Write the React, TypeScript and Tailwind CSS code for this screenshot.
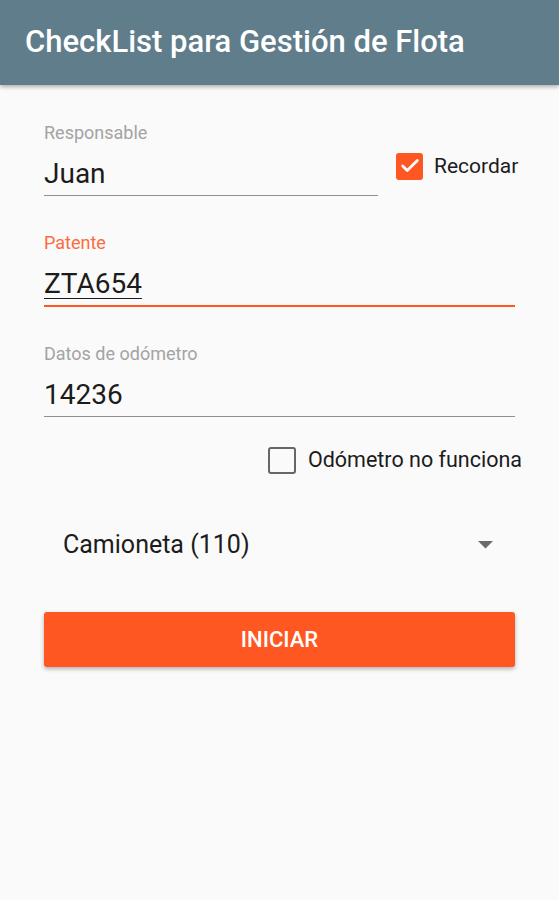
import { Check } from 'lucide-react'

const font = { fontFamily: 'Roboto, "Noto Sans", sans-serif' }

const Field = ({
  label,
  value,
  focused,
  className,
}: {
  label: string
  value: string
  focused?: boolean
  className?: string
}) => (
  <div className={className}>
    <div className={`text-[18px] leading-[20px] ${focused ? 'text-[#ff6a3d]' : 'text-[#a3a3a3]'}`}>
      {label}
    </div>
    <div
      className={`mt-[15px] pb-[5px] text-[28px] leading-[32px] text-[#1c1c1c] ${
        focused ? 'border-b-2 border-[#ff5722]' : 'border-b border-[#8f8f8f]'
      }`}
    >
      <span className={focused ? 'underline decoration-1 underline-offset-[5px]' : ''}>{value}</span>
    </div>
  </div>
)

export default function App() {
  return (
    <div className="min-h-[900px] w-[559px] bg-[#fafafa]" style={font}>
      <header className="flex h-[85px] items-center bg-[#607d8b] pl-[25px] shadow-[0_2px_4px_rgba(0,0,0,0.3)]">
        <h1 className="text-[31px] font-medium text-white">CheckList para Gestión de Flota</h1>
      </header>

      <main className="px-[44px] pt-[38px]">
        <div className="flex items-end">
          <Field label="Responsable" value="Juan" className="w-[334px] shrink-0" />
          <label className="mb-[14px] ml-[18px] flex shrink-0 items-center gap-[11px]">
            <span className="flex h-[27px] w-[27px] items-center justify-center rounded-[3px] bg-[#ff5722]">
              <Check className="h-[22px] w-[22px] text-white" strokeWidth={3} />
            </span>
            <span className="whitespace-nowrap text-[21px] text-[#1c1c1c]">Recordar</span>
          </label>
        </div>

        <Field label="Patente" value="ZTA654" focused className="mt-[37px]" />
        <Field label="Datos de odómetro" value="14236" className="mt-[37px]" />

        <div className="mr-[-7px] mt-[27px] flex items-center justify-end gap-[12px]">
          <span className="h-[27px] w-[28px] rounded-[3px] border-[2.5px] border-[#666666]" />
          <span className="text-[21.5px] text-[#1c1c1c]">Odómetro no funciona</span>
        </div>

        <div className="mt-[50px] flex items-center justify-between pl-[19px] pr-[22px]">
          <span className="text-[25px] text-[#1c1c1c]">Camioneta (110)</span>
          <svg width="15" height="8" viewBox="0 0 15 8">
            <path d="M0 0 L15 0 L7.5 7.5 Z" fill="#6b6b6b" />
          </svg>
        </div>

        <button className="mt-[48px] flex h-[55px] w-full items-center justify-center rounded-[3px] bg-[#ff5722] text-[22px] font-medium uppercase text-white shadow-[0_2px_4px_rgba(0,0,0,0.3)]">
          Iniciar
        </button>
      </main>
    </div>
  )
}
